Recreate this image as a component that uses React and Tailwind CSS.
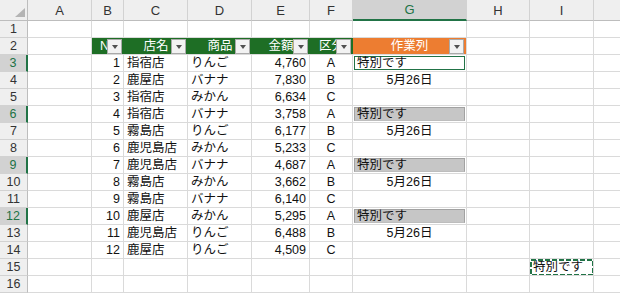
import React from "react";

const COLS = ["A", "B", "C", "D", "E", "F", "G", "H", "I", ""];
const SEL_ROWS = [3, 6, 9, 12];

const DATA = [
  [1, "指宿店", "りんご", "4,760", "A", "active"],
  [2, "鹿屋店", "バナナ", "7,830", "B", "date"],
  [3, "指宿店", "みかん", "6,634", "C", ""],
  [4, "指宿店", "バナナ", "3,758", "A", "sel"],
  [5, "霧島店", "りんご", "6,177", "B", "date"],
  [6, "鹿児島店", "みかん", "5,233", "C", ""],
  [7, "鹿児島店", "バナナ", "4,687", "A", "sel"],
  [8, "霧島店", "みかん", "3,662", "B", "date"],
  [9, "霧島店", "バナナ", "6,140", "C", ""],
  [10, "鹿屋店", "みかん", "5,295", "A", "sel"],
  [11, "鹿児島店", "りんご", "6,488", "B", "date"],
  [12, "鹿屋店", "りんご", "4,509", "C", ""],
];

const base =
  "relative flex items-center whitespace-nowrap overflow-hidden border-r border-b border-[#dadada] text-[#111]";

function Cell({ className = "", children }) {
  return <div className={`${base} ${className}`}>{children}</div>;
}

function FilterBtn() {
  return (
    <div className="absolute right-[2px] top-[1px] w-[15px] h-[15px] bg-[#f2f2f2] border border-[#a9a9a9] flex items-center justify-center">
      <div className="w-0 h-0 border-l-[3.5px] border-r-[3.5px] border-t-[4px] border-l-transparent border-r-transparent border-t-[#505050]" />
    </div>
  );
}

function HeadCell({ label, orange }) {
  return (
    <div
      className={`relative flex items-center justify-center whitespace-nowrap overflow-hidden border-b border-[#dadada] text-white ${
        orange ? "bg-[#ed7d31] border-r border-r-[#dadada]" : "bg-[#1e6e25]"
      }`}
    >
      <span>{label}</span>
      <FilterBtn />
    </div>
  );
}

export default function App() {
  const cells = [];

  cells.push(
    <div
      key="corner"
      className="relative bg-[#efefef] border-r border-b border-[#bdbdbd]"
    >
      <svg className="absolute right-[2px] bottom-[3px]" width="10" height="9" viewBox="0 0 10 9">
        <polygon points="10,0 10,9 0,9" fill="#b4b4b4" />
      </svg>
    </div>
  );
  COLS.forEach((c, i) => {
    const sel = c === "G";
    cells.push(
      <div
        key={"h" + i}
        className={`flex items-center justify-center text-[13px] border-r border-[#d2d2d2] ${
          sel
            ? "bg-[#d2d2d2] text-[#217346] border-b-2 border-b-[#217346]"
            : "bg-[#efefef] text-[#333] border-b border-b-[#bdbdbd]"
        }`}
      >
        {c}
      </div>
    );
  });

  for (let r = 1; r <= 16; r++) {
    const sel = SEL_ROWS.includes(r);
    cells.push(
      <div
        key={"r" + r}
        className={`flex items-center justify-center text-[12.5px] border-b border-b-[#d2d2d2] ${
          sel
            ? "bg-[#d2d2d2] text-[#217346] border-r-2 border-r-[#217346]"
            : "bg-[#efefef] text-[#333] border-r border-r-[#bdbdbd]"
        }`}
      >
        {r}
      </div>
    );

    const row = [];
    if (r === 2) {
      row.push(<Cell key="a" />);
      row.push(<HeadCell key="b" label="No" />);
      row.push(<HeadCell key="c" label="店名" />);
      row.push(<HeadCell key="d" label="商品" />);
      row.push(<HeadCell key="e" label="金額" />);
      row.push(<HeadCell key="f" label="区分" />);
      row.push(<HeadCell key="g" label="作業列" orange />);
      row.push(<Cell key="h" />, <Cell key="i" />, <Cell key="j" />);
    } else if (r >= 3 && r <= 14) {
      const [no, shop, item, amt, cat, g] = DATA[r - 3];
      row.push(<Cell key="a" />);
      row.push(
        <Cell key="b" className="justify-end pr-[3px]">
          {no}
        </Cell>
      );
      row.push(
        <Cell key="c" className="pl-[3px]">
          {shop}
        </Cell>
      );
      row.push(
        <Cell key="d" className="pl-[3px]">
          {item}
        </Cell>
      );
      row.push(
        <Cell key="e" className="justify-end pr-[3px]">
          {amt}
        </Cell>
      );
      row.push(
        <Cell key="f" className="justify-center">
          {cat}
        </Cell>
      );
      if (g === "active") {
        row.push(
          <Cell key="g" className="p-[1px] items-stretch">
            <div className="flex-1 flex items-center bg-white border border-[#217346] pl-[2px]">
              特別です
            </div>
          </Cell>
        );
      } else if (g === "sel") {
        row.push(
          <Cell key="g" className="p-[1px] items-stretch">
            <div className="flex-1 flex items-center bg-[#c6c6c6] border border-[#a2a2a2] border-b-[#bdbdbd] pl-[2px]">
              特別です
            </div>
          </Cell>
        );
      } else if (g === "date") {
        row.push(
          <Cell key="g" className="justify-center">
            5月26日
          </Cell>
        );
      } else {
        row.push(<Cell key="g" />);
      }
      row.push(<Cell key="h" />, <Cell key="i" />, <Cell key="j" />);
    } else if (r === 15) {
      for (let i = 0; i < 8; i++) row.push(<Cell key={"x" + i} />);
      row.push(
        <Cell key="i" className="pl-[3px]">
          特別です
          <svg className="absolute inset-0 pointer-events-none" width="64" height="17" viewBox="0 0 64 17">
            <rect x="1" y="1" width="62" height="15" fill="none" stroke="#217346" strokeWidth="2" strokeDasharray="5 2" />
          </svg>
        </Cell>
      );
      row.push(<Cell key="j" />);
    } else {
      for (let i = 0; i < 10; i++) row.push(<Cell key={"x" + i} />);
    }
    cells.push(...row.map((el, i) => <React.Fragment key={`${r}-${i}`}>{el}</React.Fragment>));
  }

  return (
    <div className="w-[620px] h-[293px] overflow-hidden bg-white font-[family-name:'Liberation_Sans','Noto_Sans_CJK_JP',sans-serif] text-[12.5px] leading-none">
      <div className="grid grid-cols-[28px_64px_32px_64px_64px_58px_43px_114px_63px_64px_64px] grid-rows-[21px_repeat(16,17px)] w-[658px]">
        {cells}
      </div>
    </div>
  );
}
